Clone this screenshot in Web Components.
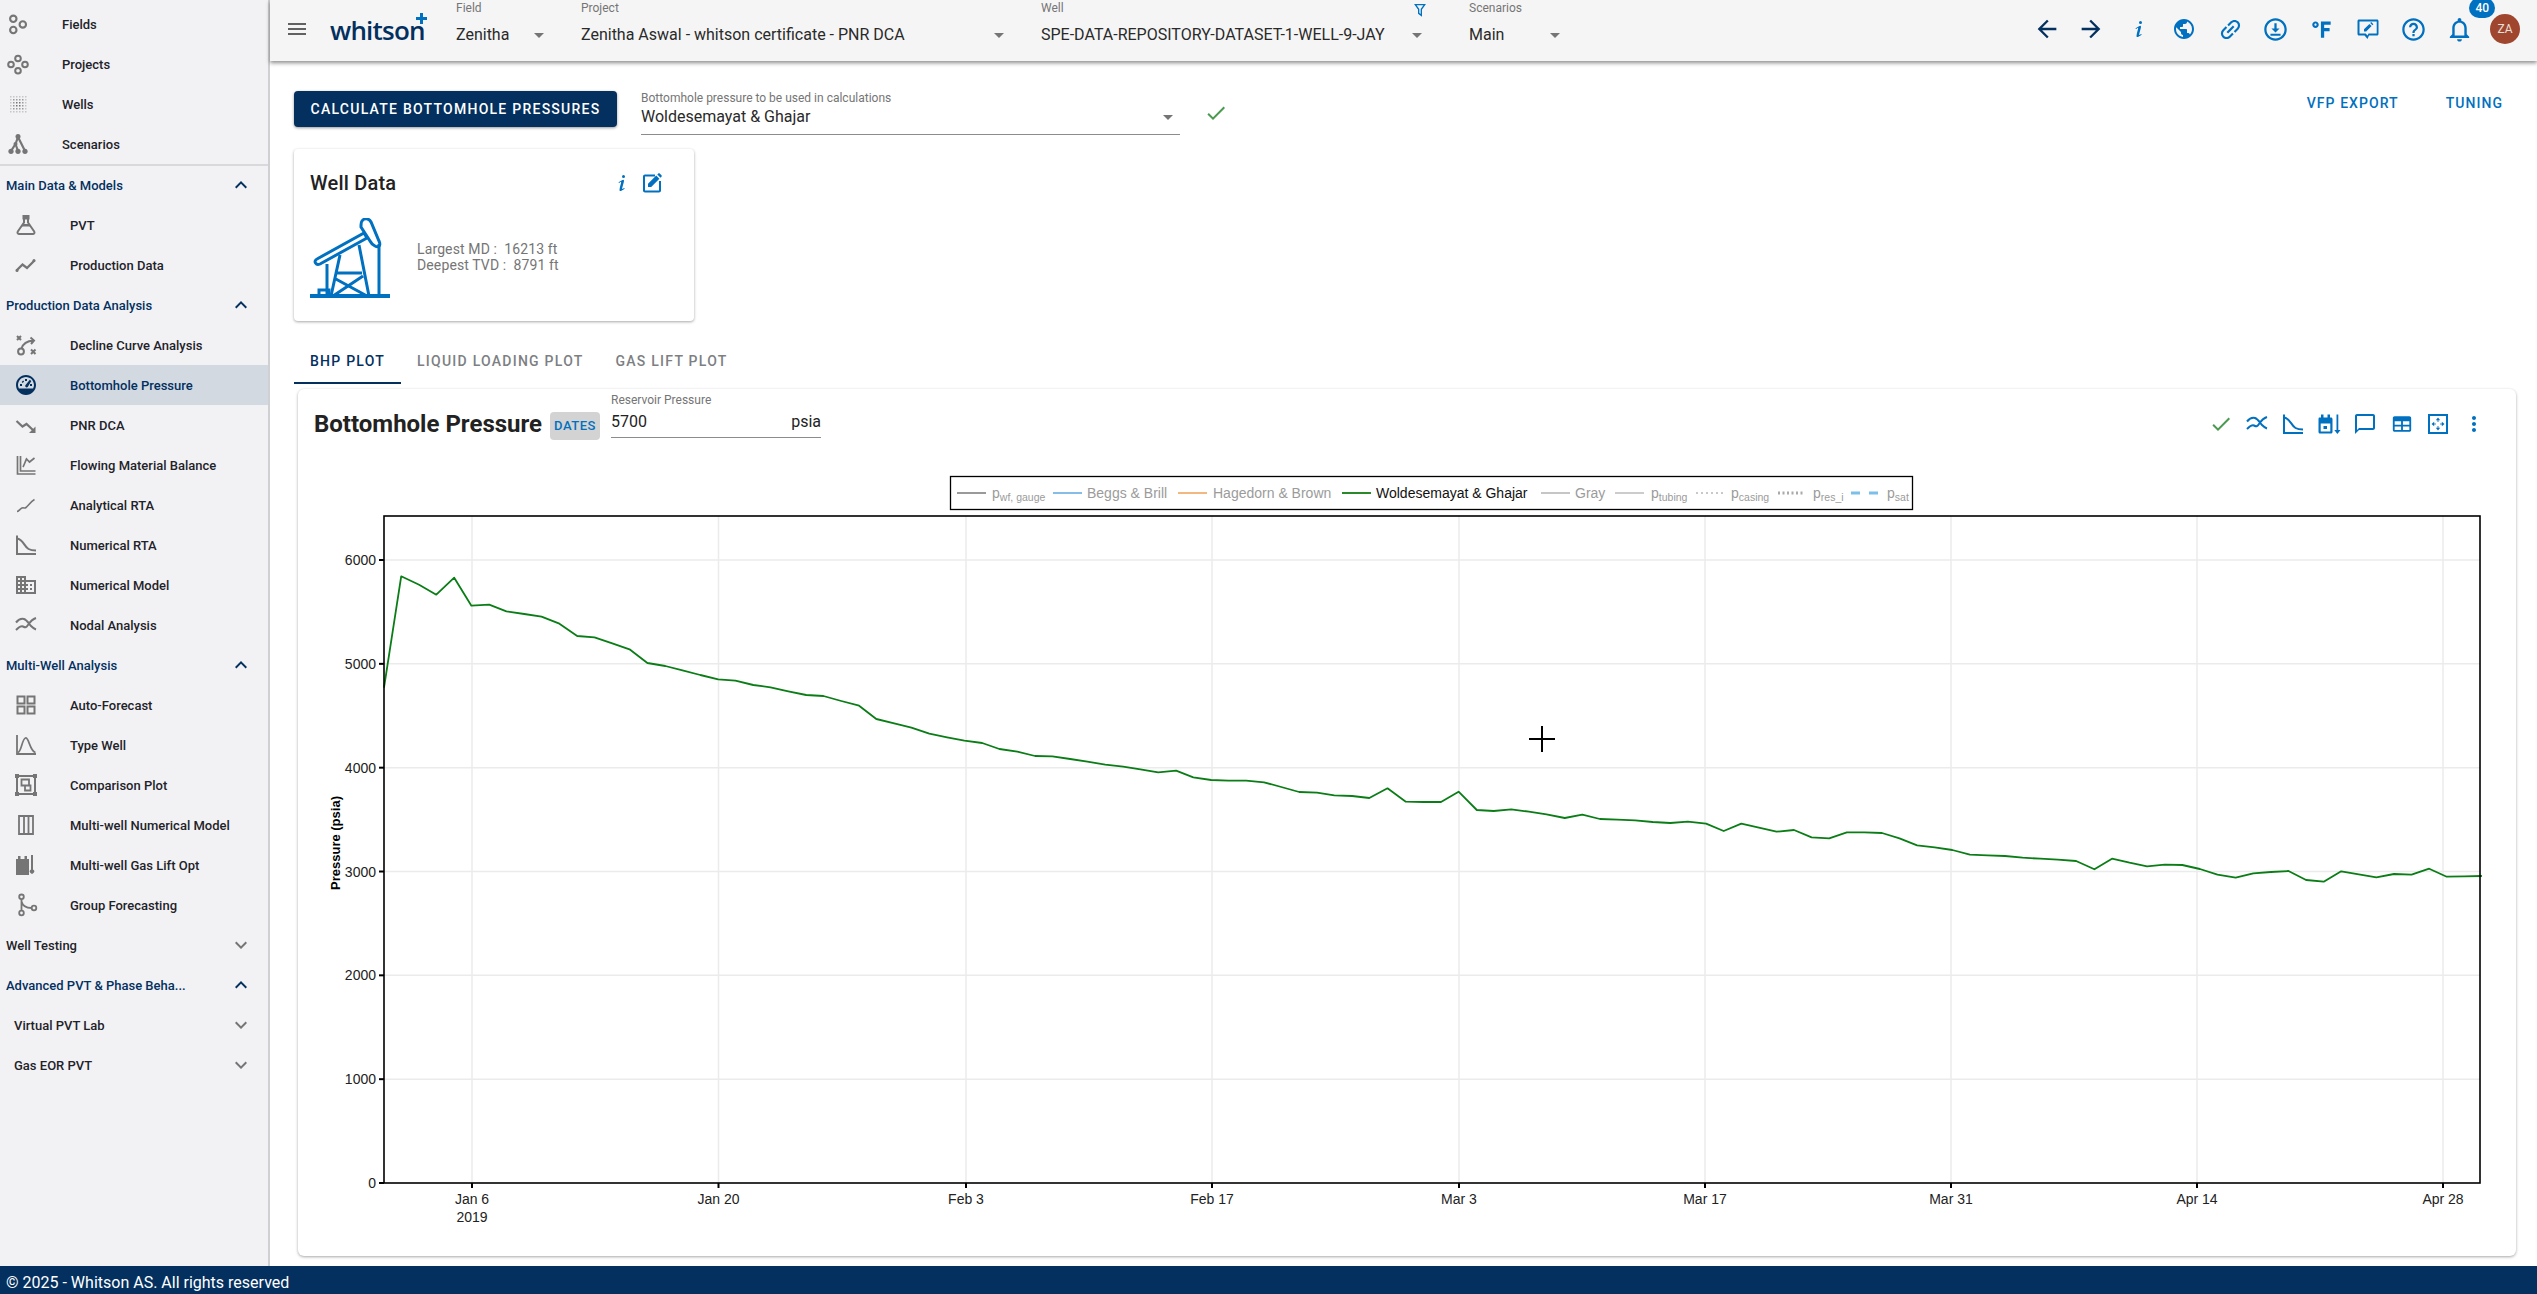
<!DOCTYPE html>
<html lang="en">
<head>
<meta charset="utf-8">
<title>whitson+ Bottomhole Pressure</title>
<style>
  html, body { margin: 0; height: 100%; overflow: hidden; background: #fff; }
  body { font-family: Roboto, "Liberation Sans", sans-serif; }
</style>
</head>
<body>

<wh-app>
  <wh-sidebar slot="sidebar">
    <wh-nav-item icon="fields" top>Fields</wh-nav-item>
    <wh-nav-item icon="projects" top>Projects</wh-nav-item>
    <wh-nav-item icon="wells" top>Wells</wh-nav-item>
    <wh-nav-item icon="scenarios" top>Scenarios</wh-nav-item>
    <wh-nav-divider></wh-nav-divider>
    <wh-nav-section open>Main Data &amp; Models</wh-nav-section>
    <wh-nav-item icon="pvt">PVT</wh-nav-item>
    <wh-nav-item icon="proddata">Production Data</wh-nav-item>
    <wh-nav-section open>Production Data Analysis</wh-nav-section>
    <wh-nav-item icon="dca">Decline Curve Analysis</wh-nav-item>
    <wh-nav-item icon="gauge" active>Bottomhole Pressure</wh-nav-item>
    <wh-nav-item icon="pnr">PNR DCA</wh-nav-item>
    <wh-nav-item icon="fmb">Flowing Material Balance</wh-nav-item>
    <wh-nav-item icon="rta">Analytical RTA</wh-nav-item>
    <wh-nav-item icon="decline">Numerical RTA</wh-nav-item>
    <wh-nav-item icon="domain">Numerical Model</wh-nav-item>
    <wh-nav-item icon="nodal">Nodal Analysis</wh-nav-item>
    <wh-nav-section open>Multi-Well Analysis</wh-nav-section>
    <wh-nav-item icon="grid">Auto-Forecast</wh-nav-item>
    <wh-nav-item icon="bell-curve">Type Well</wh-nav-item>
    <wh-nav-item icon="compare">Comparison Plot</wh-nav-item>
    <wh-nav-item icon="columns">Multi-well Numerical Model</wh-nav-item>
    <wh-nav-item icon="gaslift">Multi-well Gas Lift Opt</wh-nav-item>
    <wh-nav-item icon="group">Group Forecasting</wh-nav-item>
    <wh-nav-section>Well Testing</wh-nav-section>
    <wh-nav-section open>Advanced PVT &amp; Phase Beha...</wh-nav-section>
    <wh-nav-section sub>Virtual PVT Lab</wh-nav-section>
    <wh-nav-section sub>Gas EOR PVT</wh-nav-section>
  </wh-sidebar>

  <wh-header slot="header"></wh-header>

  <wh-toolbar></wh-toolbar>
  <wh-well-card></wh-well-card>
  <wh-tabs></wh-tabs>
  <wh-bhp-card></wh-bhp-card>

  <wh-footer slot="footer">© 2025 - Whitson AS. All rights reserved</wh-footer>
</wh-app>

<script>
const stroke = (d, w = 2) => `<path d="${d}" fill="none" stroke="currentColor" stroke-width="${w}"/>`;

function wellDots() {
    let out = '';
    for (let i = 0; i < 6; i++) {
        for (let j = 0; j < 6; j++) {
            const dist = Math.max(Math.abs(i - 2.5), Math.abs(j - 2.5));
            const op = dist === 2.5 ? 0.35 : dist === 1.5 ? 0.7 : 1;
            out += `<rect x="${4 + i * 3}" y="${4 + j * 3}" width="1.5" height="1.5" opacity="${op}"/>`;
        }
    }
    return out;
}

const ICONS = {
    menu: '<path d="M3 18h18v-2H3v2zm0-5h18v-2H3v2zm0-7v2h18V6H3z"/>',
    back: '<path d="M20 11H7.83l5.59-5.59L12 4l-8 8 8 8 1.41-1.41L7.83 13H20v-2z"/>',
    forward: '<path d="M12 4l-1.41 1.41L16.17 11H4v2h12.17l-5.58 5.59L12 20l8-8z"/>',
    info: '<path d="M13.5,4A1.5,1.5 0 0,0 12,5.5A1.5,1.5 0 0,0 13.5,7A1.5,1.5 0 0,0 15,5.5A1.5,1.5 0 0,0 13.5,4M13.14,8.77C11.95,8.87 8.7,11.46 8.7,11.46C8.5,11.61 8.56,11.6 8.72,11.88C8.88,12.15 8.86,12.17 9.05,12.04C9.25,11.91 9.58,11.7 10.13,11.36C12.25,10 10.47,13.14 9.56,18.43C9.2,21.05 11.56,19.7 12.17,19.3C12.77,18.91 14.38,17.8 14.54,17.69C14.76,17.54 14.6,17.42 14.43,17.17C14.31,17 14.19,17.12 14.19,17.12C13.54,17.55 12.35,18.45 12.19,17.88C12,17.31 13.22,13.4 13.89,10.71C14,10.07 14.3,8.67 13.14,8.77Z"/>',
    globe: '<path d="M12 2C6.48 2 2 6.48 2 12s4.48 10 10 10 10-4.48 10-10S17.52 2 12 2zm-1 17.93c-3.95-.49-7-3.85-7-7.93 0-.62.08-1.21.21-1.79L9 15v1c0 1.1.9 2 2 2v1.93zm6.9-2.54c-.26-.81-1-1.39-1.9-1.39h-1v-3c0-.55-.45-1-1-1H8v-2h2c.55 0 1-.45 1-1V7h2c1.1 0 2-.9 2-2v-.41c2.93 1.19 5 4.06 5 7.41 0 2.08-.8 3.97-2.1 5.39z"/>',
    link: '<path transform="rotate(-45 12 12)" d="M3.9 12c0-1.71 1.39-3.1 3.1-3.1h4V7H7c-2.76 0-5 2.24-5 5s2.24 5 5 5h4v-1.9H7c-1.71 0-3.1-1.39-3.1-3.1zM8 13h8v-2H8v2zm9-6h-4v1.9h4c1.71 0 3.1 1.39 3.1 3.1s-1.39 3.1-3.1 3.1h-4V17h4c2.76 0 5-2.24 5-5s-2.24-5-5-5z"/>',
    download: '<path d="M12 2C6.48 2 2 6.48 2 12s4.48 10 10 10 10-4.48 10-10S17.52 2 12 2zm0 18c-4.41 0-8-3.59-8-8s3.59-8 8-8 8 3.59 8 8-3.59 8-8 8z"/><path d="M11 6.5h2V11h2.6L12 14.6 8.400 11H11zM7.500 15.800h9v1.800h-9z"/>',
    fahrenheit: '<path d="M11 20V5H20V8H14V11H19V14H14V20H11M6 5C7.66 5 9 6.34 9 8C9 9.66 7.66 11 6 11C4.34 11 3 9.66 3 8C3 6.34 4.34 5 6 5M6 7C5.45 7 5 7.45 5 8C5 8.55 5.45 9 6 9C6.55 9 7 8.55 7 8C7 7.45 6.55 7 6 7Z"/>',
    feedback: '<path d="M21 2.500H3c-.83 0-1.500.67-1.500 1.500v13c0 .83.67 1.500 1.500 1.500h5.500l3 3.500 1.500-3.500h8c.83 0 1.500-.67 1.500-1.500V4c0-.83-.67-1.500-1.500-1.500zm-.3 14H12.500l-1 2.100-1.800-2.100H3.500v-12h17.200z"/><path d="M8 14.500v-2.200l5.400-5.400 2.200 2.200-5.400 5.400zM14.200 6.100l1-1 2.200 2.200-1 1z"/>',
    help: '<path d="M11 18h2v-2h-2v2zm1-16C6.48 2 2 6.48 2 12s4.48 10 10 10 10-4.48 10-10S17.52 2 12 2zm0 18c-4.41 0-8-3.59-8-8s3.59-8 8-8 8 3.59 8 8-3.59 8-8 8zm0-14c-2.21 0-4 1.79-4 4h2c0-1.1.9-2 2-2s2 .9 2 2c0 2-3 1.750-3 5h2c0-2.250 3-2.500 3-5 0-2.210-1.790-4-4-4z"/>',
    bell: '<path d="M12 22c1.100 0 2-.9 2-2h-4c0 1.100.9 2 2 2zm6-6v-5c0-3.070-1.630-5.640-4.500-6.320V4c0-.83-.67-1.500-1.500-1.500s-1.500.67-1.500 1.500v.68C7.640 5.360 6 7.920 6 11v5l-2 2v1h16v-1l-2-2zm-2 1H8v-6c0-2.480 1.510-4.500 4-4.500s4 2.020 4 4.500v6z"/>',
    more: '<path d="M12 8c1.100 0 2-.9 2-2s-.9-2-2-2-2 .9-2 2 .9 2 2 2zm0 2c-1.100 0-2 .9-2 2s.9 2 2 2 2-.9 2-2-.9-2-2-2zm0 6c-1.100 0-2 .9-2 2s.9 2 2 2 2-.9 2-2-.9-2-2-2z"/>',
    less: '<path d="M12 8l-6 6 1.410 1.410L12 10.830l4.590 4.580L18 14z"/>',
    expand: '<path d="M16.590 8.590L12 13.170 7.410 8.590 6 10l6 6 6-6z"/>',
    caret: '<path d="M7 10l5 5 5-5z"/>',
    check: '<path d="M9 16.170L4.830 12l-1.420 1.410L9 19 21 7l-1.410-1.410z"/>',
    edit: '<path d="M5 3.500h10v2H5v14h14V10h2v9.500c0 1.100-.9 2-2 2H5c-1.100 0-2-.9-2-2v-14c0-1.100.9-2 2-2z"/><path d="M8 16v-3.200l8.200-8.200 3.200 3.200-8.200 8.200zM17.300 3.500l1-1c.4-.4 1-.4 1.400 0l1.800 1.800c.4.4.4 1 0 1.400l-1 1z"/>',
    filter: stroke('M5 4h14l-5 7v9l-4-3v-6z', 2),
    fields: `<g fill="none" stroke="currentColor" stroke-width="2.100"><circle cx="7.300" cy="6.800" r="3.200"/><circle cx="16.800" cy="12.400" r="3.200"/><circle cx="7.300" cy="18" r="3.200"/></g>`,
    projects: `<g fill="none" stroke="currentColor" stroke-width="2"><circle cx="12" cy="6.500" r="2.800"/><circle cx="5" cy="12.500" r="2.800"/><circle cx="19" cy="12.500" r="2.800"/><circle cx="12" cy="18.800" r="2.800"/></g>`,
    wells: wellDots(),
    scenarios: '<circle cx="12" cy="4.500" r="2.500"/><circle cx="5" cy="19.300" r="2.600"/><circle cx="12" cy="19.300" r="2.600"/><circle cx="19" cy="19.300" r="2.600"/><circle cx="9.500" cy="12" r="2"/>' + stroke('M12 5l-2.500 7L5 19M9.500 12L12 19M12 5l7 14', 2.200),
    pvt: '<path d="M8.500 2h7v4.500h-7z"/>' + stroke('M10 6v3.500L3.800 18.500c-.8 1.300.1 2.500 1.400 2.500h13.600c1.300 0 2.200-1.200 1.400-2.500L14 9.500V6', 2) + '<path d="M7.800 13.500h8.400l-1.500-2.500H9.300z"/>',
    proddata: stroke('M2.500 17.500l6-6 4.500 3.500 7.500-7.500', 2.300) + '<circle cx="3" cy="17.500" r="1.500"/><circle cx="20" cy="7.500" r="1.500"/>',
    dca: stroke('M3 3l4 4M7 3L3 7M17 16.500l4.500 4.500M21.500 16.500L17 21', 2) + stroke('M7.500 15.500C9 10.500 13 8 19.500 7.500M16.500 4.500l3.500 3-3 3.500', 2) + '<circle cx="7" cy="18.500" r="2.900" fill="none" stroke="currentColor" stroke-width="2"/>',
    gauge: '<path d="M12 2C6.500 2 2 6.500 2 12s4.500 10 10 10 10-4.500 10-10S17.500 2 12 2zm0 2c4.400 0 8 3.600 8 8 0 1.300-.3 2.500-.9 3.600H4.900C4.300 14.500 4 13.300 4 12c0-4.400 3.600-8 8-8z"/><path d="M11 6h2v2h-2zM6 11h2v2H6zM16 11h2v2h-2zM7.700 8.900l1.400-1.400 1 1-1.400 1.400zM15.800 6.800l1.500 1.200-3.400 5.700c-.5.800-1.500.9-2.200.3-.7-.6-.6-1.700.1-2.200z"/>',
    pnr: stroke('M2.500 8l6 5.500 4-2.500 7.500 7', 2.200) + '<path d="M21.500 13.500V20H15z"/>',
    fmb: stroke('M3.500 3v18h18M6.500 3v15h15', 1.700) + stroke('M9 14c1.500-3 2.500-6 3.500-8l3 3 5-4', 1.700),
    rta: stroke('M3 18.500c1.500 0 3-2.500 5-3.500s2 1 4-.5 5-6 8.500-8', 1.600),
    decline: stroke('M3 2.500V21h19M3 5.500c6 .5 7 8 11.500 10.500 2 1.100 5 1.500 7.500 1.500', 2),
    domain: '<path d="M12 7V3H2v18h20V7H12zM6 19H4v-2h2v2zm0-4H4v-2h2v2zm0-4H4V9h2v2zm0-4H4V5h2v2zm4 12H8v-2h2v2zm0-4H8v-2h2v2zm0-4H8V9h2v2zm0-4H8V5h2v2zm10 12h-8v-2h2v-2h-2v-2h2v-2h-2V9h8v10zm-2-8h-2v2h2v-2zm0 4h-2v2h2v-2z"/>',
    nodal: stroke('M2 9.500c2.500-3 5-4.500 8-3.500s5 5 7 7 3.500 3 5 3.500M2 17c3.500-3.500 5-4.500 7-3.500s3 1.500 5-1.500 5-6 8-7', 2),
    grid: stroke('M3.500 3.500h7v7h-7zM13.500 3.500h7v7h-7zM3.500 13.500h7v7h-7zM13.500 13.500h7v7h-7z', 2),
    'bell-curve': stroke('M3 2v19h19', 1.800) + stroke('M4 19.500c3.500-1 4-13.500 7.500-14.500s4 13 10 14.500', 1.700),
    compare: stroke('M3 3h18v18H3z', 2) + stroke('M7.500 6.500h7.500v6H7.500zM11 12.500h5.500v5H11z', 1.800) + '<path d="M1 1h4v4H1zM19 1h4v4h-4zM1 19h4v4H1zM19 19h4v4h-4z"/>',
    columns: stroke('M5 3h14v18H5zM10 3v18M14.500 3v18', 1.800),
    gaslift: '<path d="M2 6h2V3h2.500v3h4V3H13v3h2v16H2z"/><path d="M17 2h2v14.500a2.200 2.200 0 1 1-2 0z"/>',
    group: '<circle cx="7.500" cy="3.800" r="2.300" fill="none" stroke="currentColor" stroke-width="1.800"/><circle cx="7.500" cy="20" r="2.300" fill="none" stroke="currentColor" stroke-width="1.800"/><circle cx="20" cy="15" r="2.300" fill="none" stroke="currentColor" stroke-width="1.800"/>' + stroke('M7.500 6v11.500M7.500 8.500c1 4 4 6.500 10 6.500', 1.800),
    'date-sort': '<path d="M2 5.500h2V2.500h2.500v3h4v-3H13v3h1c.8 0 1.500.7 1.500 1.500v13c0 .8-.7 1.500-1.500 1.500H3c-.8 0-1.500-.7-1.500-1.500V7c0-.8.5-1.500.5-1.500zM3.700 11.500v8h9.600v-8zM6.500 14h3.500v3H6.500z" fill-rule="evenodd"/><path d="M19.500 2.500h1.800V18h2.200l-3.100 4-3.100-4h2.200z"/>',
    chat: '<path d="M20 2H4c-1.100 0-2 .9-2 2v18l4-4h14c1.100 0 2-.9 2-2V4c0-1.100-.9-2-2-2zm0 14H6l-2 2V4h16v12z"/>',
    table: '<path d="M20 3.500H4c-1.100 0-2 .9-2 2v13c0 1.100.9 2 2 2h16c1.100 0 2-.9 2-2v-13c0-1.100-.9-2-2-2zM4 9h7v3.700H4zm9 0h7v3.700h-7zM4 14.700h7v3.800H4zm9 0h7v3.800h-7z" fill-rule="evenodd"/>',
    fit: stroke('M3 3h18v18H3z', 2) + '<path d="M12 5.500l2.200 2.700H9.800zM12 18.500l-2.200-2.700h4.400zM5.500 12l2.700-2.200v4.400zM18.500 12l-2.700 2.200V9.800z"/><path d="M11.400 8.200h1.200v1.600h-1.200zM11.400 14.200h1.200v1.600h-1.200zM8.200 11.400h1.600v1.200H8.200zM14.200 11.400h1.600v1.200h-1.600z"/>'
};

class WhIcon extends HTMLElement {
    connectedCallback() {
        const size = this.getAttribute('size') || 24;
        const name = this.getAttribute('name');
        this.attachShadow({ mode: 'open' });
        this.shadowRoot.innerHTML = `
            <style>
                :host { display: inline-flex; width: ${size}px; height: ${size}px; flex: none; }
                svg { width: 100%; height: 100%; fill: currentColor; display: block; }
            </style>
            <svg viewBox="0 0 24 24" aria-hidden="true">${ICONS[name] || ''}</svg>`;
    }
}

class WhApp extends HTMLElement {
    connectedCallback() {
        this.attachShadow({ mode: 'open' });
        this.shadowRoot.innerHTML = `
            <style>
                :host { display: grid; height: 100vh; grid-template-columns: 270px 1fr; grid-template-rows: 61px 1fr 28px; }
                ::slotted([slot=sidebar]) { grid-row: 1 / 3; }
                ::slotted([slot=footer]) { grid-column: 1 / 3; }
                main { padding: 30px 21px 0 24px; overflow: hidden; display: flex; flex-direction: column; }
            </style>
            <slot name="sidebar"></slot>
            <slot name="header"></slot>
            <main><slot></slot></main>
            <slot name="footer"></slot>`;
    }
}

class WhSidebar extends HTMLElement {
    connectedCallback() {
        this.attachShadow({ mode: 'open' });
        this.shadowRoot.innerHTML = `
            <style>
                :host { display: block; background: #f2f2f5; border-right: 2px solid #cfd0d3; box-sizing: border-box; padding-top: 4px; overflow: hidden; }
            </style>
            <slot></slot>`;
    }
}

class WhNavItem extends HTMLElement {
    connectedCallback() {
        const top = this.hasAttribute('top');
        const active = this.hasAttribute('active');
        this.attachShadow({ mode: 'open' });
        this.shadowRoot.innerHTML = `
            <style>
                :host { display: flex; align-items: center; height: 40px; font: 500 13px Roboto, sans-serif; color: ${active ? '#03305f' : '#1f2329'}; background: ${active ? '#d2d9e1' : 'transparent'}; padding-left: ${top ? 6 : 14}px; }
                wh-icon { color: ${active ? '#03305f' : '#757575'}; margin-right: 32px; }
            </style>
            <wh-icon name="${this.getAttribute('icon')}"></wh-icon>
            <slot></slot>`;
    }
}

class WhNavDivider extends HTMLElement {
    connectedCallback() {
        this.attachShadow({ mode: 'open' });
        this.shadowRoot.innerHTML = `<style>:host { display: block; height: 2px; background: #d9d9dd; margin-bottom: -1px; }</style>`;
    }
}

class WhNavSection extends HTMLElement {
    connectedCallback() {
        const open = this.hasAttribute('open');
        const sub = this.hasAttribute('sub');
        this.attachShadow({ mode: 'open' });
        this.shadowRoot.innerHTML = `
            <style>
                :host { display: flex; align-items: center; justify-content: space-between; height: 40px; font: 500 13px Roboto, sans-serif; color: ${open ? '#03305f' : '#1f2329'}; padding: 0 15px 0 ${sub ? 14 : 6}px; }
                wh-icon { color: ${open ? '#03305f' : '#757575'}; }
            </style>
            <slot></slot>
            <wh-icon name="${open ? 'less' : 'expand'}"></wh-icon>`;
    }
}

class WhSelect extends HTMLElement {
    connectedCallback() {
        this.attachShadow({ mode: 'open' });
        this.shadowRoot.innerHTML = `
            <style>
                :host { display: flex; flex-direction: column; flex: none; font-family: Roboto, sans-serif; box-sizing: border-box; }
                label { font-size: 12px; line-height: 14px; color: #757575; white-space: nowrap; }
                .value { display: flex; align-items: center; justify-content: space-between; font-size: 16px; line-height: 24px; color: #2a2a2a; white-space: nowrap; margin-top: var(--value-gap, 0); }
                wh-icon { color: #757575; margin-right: var(--caret-shift, -3px); }
            </style>
            <label>${this.getAttribute('label')}</label>
            <div class="value"><span><slot></slot></span><wh-icon name="caret"></wh-icon></div>`;
    }
}

class WhHeader extends HTMLElement {
    connectedCallback() {
        const actions = [['back', 28], ['forward', 28], ['info', 24], ['globe', 24], ['link', 27], ['download', 27], ['fahrenheit', 26], ['feedback', 24], ['help', 27], ['bell', 29]];
        this.attachShadow({ mode: 'open' });
        this.shadowRoot.innerHTML = `
            <style>
                :host { display: flex; align-items: flex-start; background: #f5f5f5; box-shadow: 0 2px 4px rgba(0,0,0,.45); position: relative; z-index: 2; padding-left: 15px; height: 61px; box-sizing: border-box; }
                .menu { color: #616161; margin: 17px 21px 0 0; }
                .logo { position: relative; width: 97px; margin: 8px 29px 0 0; font: 600 26px/44px "Open Sans", sans-serif; letter-spacing: -.8px; color: #03305f; }
                .plus { position: absolute; left: 86px; top: 5px; width: 11px; height: 11px; fill: #0070c0; }
                wh-select { margin-top: 1px; --value-gap: 8px; --caret-shift: -4.500px; }
                .filter { position: absolute; left: 1142px; top: 2px; color: #0070c0; }
                .actions { margin-left: auto; display: flex; align-items: center; height: 58px; padding-right: 17px; color: #0070c0; }
                .actions span { display: flex; justify-content: center; align-items: center; width: 45.800px; height: 24px; position: relative; }
                .actions span:nth-child(2) { left: -2px; }
                .dark { color: #03305f; }
                .badge { position: absolute; left: 33px; top: -19px; min-width: 26px; height: 20px; border-radius: 10px; background: #0070c0; color: #fff; font: 500 12px/20px Roboto, sans-serif; text-align: center; }
                .avatar { width: 30px; height: 30px; border-radius: 50%; background: #a0452e; color: #e8e0dc; font: 400 12px/30px Roboto, sans-serif; text-align: center; margin-left: 8px; position: relative; z-index: 1; }
            </style>
            <wh-icon class="menu" name="menu" size="24" style="width:24px"></wh-icon>
            <div class="logo">whitson<svg class="plus" viewBox="0 0 11 11"><path d="M4 0h3v4h4v3H7v4H4V7H0V4h4z"/></svg></div>
            <wh-select label="Field" style="width:90px;margin-right:35px">Zenitha</wh-select>
            <wh-select label="Project" style="width:425px;margin-right:35px">Zenitha Aswal - whitson certificate - PNR DCA</wh-select>
            <wh-select label="Well" style="width:383px;margin-right:45px">SPE-DATA-REPOSITORY-DATASET-1-WELL-9-JAY</wh-select>
            <wh-select label="Scenarios" style="width:93px">Main</wh-select>
            <wh-icon class="filter" name="filter" size="16"></wh-icon>
            <div class="actions">
                ${actions.map(([n, s], i) => `<span class="${i < 2 ? 'dark' : ''}"><wh-icon name="${n}" size="${s}"></wh-icon>${n === 'bell' ? '<b class="badge">40</b>' : ''}</span>`).join('')}
                <div class="avatar">ZA</div>
            </div>`;
    }
}

class WhToolbar extends HTMLElement {
    connectedCallback() {
        this.attachShadow({ mode: 'open' });
        this.shadowRoot.innerHTML = `
            <style>
                :host { display: flex; align-items: flex-start; height: 58px; flex: none; }
                button { width: 323px; height: 36px; border: 0; border-radius: 4px; background: #03305f; color: #fff; font: 500 14px Roboto, sans-serif; letter-spacing: 1.250px; box-shadow: 0 1px 3px rgba(0,0,0,.4); padding: 0; flex: none; }
                .pick { margin-left: 24px; width: 539px; height: 43px; border-bottom: 1px solid #8c8c8c; flex: none; }
                wh-select { width: 100%; --caret-shift: 0px; }
                .ok { color: #4a9a50; margin: 10px 0 0 24px; }
                .links { margin-left: auto; display: flex; gap: 47px; padding: 0 13px 0 0; font: 500 14px/24px Roboto, sans-serif; letter-spacing: 1.050px; color: #0070c0; }
            </style>
            <button>CALCULATE BOTTOMHOLE PRESSURES</button>
            <div class="pick"><wh-select label="Bottomhole pressure to be used in calculations">Woldesemayat &amp; Ghajar</wh-select></div>
            <wh-icon class="ok" name="check"></wh-icon>
            <div class="links"><span>VFP EXPORT</span><span>TUNING</span></div>`;
    }
}

class WhWellCard extends HTMLElement {
    connectedCallback() {
        this.attachShadow({ mode: 'open' });
        this.shadowRoot.innerHTML = `
            <style>
                :host { display: block; width: 400px; height: 172px; flex: none; box-sizing: border-box; padding: 20px 16px; background: #fff; border-radius: 4px; box-shadow: 0 1px 3px rgba(0,0,0,.35); font-family: Roboto, sans-serif; }
                .top { display: flex; align-items: center; height: 28px; }
                h3 { margin: 0; font: 500 20px/28px Roboto, sans-serif; letter-spacing: .2px; color: #222; flex: 1; }
                wh-icon { color: #0070c0; }
                .top wh-icon + wh-icon { margin: 0 14px 0 6px; }
                .body { display: flex; align-items: center; margin-top: 21px; }
                svg { width: 82px; height: 80px; flex: none; color: #0070c0; }
                p { margin: -3px 0 0 25px; font-size: 14px; line-height: 16px; letter-spacing: .12px; color: #757575; white-space: pre; }
            </style>
            <div class="top"><h3>Well Data</h3><wh-icon name="info"></wh-icon><wh-icon name="edit"></wh-icon></div>
            <div class="body">
                <svg viewBox="0 0 82 80" fill="none" stroke="currentColor" stroke-width="3">
                    <path d="M0 78h80" stroke-width="4"/>
                    <path d="M9 78V72h10v6M7 41l47-26 3 5-47 26c-4 2-7-3-3-5z"/>
                    <path d="M52 3c2-3 7-3 9 1l8 19c2 4 0 7-4 5-2-1-4-3-5-5L51 9c0-3 0-5 1-6z" />
                    <path d="M69 26v52M17 46v30M49 27l10 51M30 37L21 78M26 55h26M24 60l33 18M53 58L23 78"/>
                </svg>
                <p>Largest MD :  16213 ft
Deepest TVD :  8791 ft</p>
            </div>`;
    }
}

class WhTabs extends HTMLElement {
    connectedCallback() {
        this.attachShadow({ mode: 'open' });
        this.shadowRoot.innerHTML = `
            <style>
                :host { display: flex; flex: none; height: 63px; align-items: flex-end; font: 500 14px Roboto, sans-serif; letter-spacing: 1.250px; color: #7d7f83; margin-bottom: 5px; }
                div { padding: 0 16px; height: 46px; line-height: 46px; }
                .on { color: #03305f; box-shadow: inset 0 -2px 0 #03305f; width: 107px; padding: 0; box-sizing: border-box; text-align: center; }
            </style>
            <div class="on">BHP PLOT</div><div>LIQUID LOADING PLOT</div><div>GAS LIFT PLOT</div>`;
    }
}

// daily values read off the plot, as screen pixels of the 1000 px / 1100 px crops
const LEFT_TRACE = [[0,383],[27,49],[55,74],[82,104],[110,53],[137,137],[165,134],[192,154],[220,162],[247,170],[275,191],[303,228],[330,232],[358,250],[385,268],[413,309],[441,318],[468,331],[496,345],[524,358],[551,362],[579,375],[606,382],[634,394],[662,405],[689,408],[717,423],[745,437],[772,477],[800,490],[827,503],[855,521],[883,532],[910,542],[938,549],[965,567],[993,575],[1021,588],[1048,589],[1076,597],[1103,605],[1131,614],[1159,620],[1186,628],[1214,637],[1242,632],[1269,652],[1297,660],[1324,662],[1352,662],[1380,667],[1407,681],[1435,696],[1463,698],[1490,706],[1518,708],[1545,714]];
const RIGHT_TRACE = [[5,85],[31,125],[56,126],[81,126],[106,95],[132,150],[156,153],[181,148],[206,155],[231,163],[257,174],[282,164],[307,177],[332,179],[357,181],[382,186],[407,189],[432,185],[458,191],[483,213],[508,191],[533,203],[558,215],[583,210],[608,232],[633,235],[658,217],[683,217],[708,219],[733,235],[758,256],[783,262],[808,270],[833,284],[858,286],[883,288],[908,293],[933,296],[958,299],[984,303],[1010,328],[1035,296],[1060,308],[1085,319],[1110,314],[1135,315],[1160,327],[1185,344],[1211,353],[1236,340],[1261,336],[1286,333],[1311,360],[1336,365],[1361,334],[1386,343],[1411,352],[1436,342],[1461,344],[1486,326],[1511,350],[1536,349],[1561,348]];

class WhBhpChart extends HTMLElement {
    connectedCallback() {
        const L = 384, R = 2480, T = 516, B = 1183;
        const yTicks = [0, 1000, 2000, 3000, 4000, 5000, 6000].map(v => ({ v, y: B - v * 0.10383 }));
        const xTicks = [['Jan 6', 472], ['Jan 20', 718.5], ['Feb 3', 966], ['Feb 17', 1212], ['Mar 3', 1459], ['Mar 17', 1705], ['Mar 31', 1951], ['Apr 14', 2197], ['Apr 28', 2443]];
        const pts = LEFT_TRACE.map(([x, y]) => [384 + x / 1.568, 560 + y / 3])
            .concat(RIGHT_TRACE.map(([x, y]) => [1384 + x / 1.4218, 760 + y / 3]))
            .map(p => p[0].toFixed(1) + ',' + p[1].toFixed(1)).join(' ');
        const legend = [
            { x1: 957, x2: 986, c: '#9a9a9a', tx: 992, t: 'p', s: 'wf, gauge' },
            { x1: 1053, x2: 1082, c: '#85bde8', tx: 1087, t: 'Beggs & Brill' },
            { x1: 1178, x2: 1207, c: '#f2b880', tx: 1213, t: 'Hagedorn & Brown' },
            { x1: 1342, x2: 1371, c: '#2a8a2a', tx: 1376, t: 'Woldesemayat & Ghajar', on: true },
            { x1: 1541, x2: 1570, c: '#c6c6c6', tx: 1575, t: 'Gray' },
            { x1: 1615, x2: 1644, c: '#cccccc', tx: 1651, t: 'p', s: 'tubing' },
            { x1: 1696, x2: 1724, c: '#c8c8c8', tx: 1731, t: 'p', s: 'casing', dash: '2 3' },
            { x1: 1778, x2: 1805, c: '#aaaaaa', w: 3, tx: 1813, t: 'p', s: 'res_i', dash: '2 2.500' },
            { x1: 1851, x2: 1878, c: '#7cc0ea', w: 3, tx: 1887, t: 'p', s: 'sat', dash: '9 9' }
        ];
        const esc = s => s.replace(/&/g, '&amp;');
        this.attachShadow({ mode: 'open' });
        this.shadowRoot.innerHTML = `
            <style>
                :host { display: block; flex: none; height: 770px; }
                svg { display: block; width: 2218px; height: 770px; font-family: "Liberation Sans", Arial, sans-serif; }
                text { font-size: 14px; fill: #222; }
                .grid { stroke: #ebebeb; stroke-width: 1.500; }
                .tick { stroke: #000; stroke-width: 2; }
                .leg { font-size: 14px; fill: #9b9b9b; }
                .leg.on { fill: #111; }
                .leg tspan { font-size: 10.500px; }
            </style>
            <svg viewBox="298 470 2218 770">
                ${yTicks.filter(t => t.v > 0).map(t => `<line class="grid" x1="${L}" x2="${R}" y1="${t.y}" y2="${t.y}"/>`).join('')}
                ${xTicks.map(t => `<line class="grid" x1="${t[1]}" x2="${t[1]}" y1="${T}" y2="${B}"/>`).join('')}
                <polyline points="${pts}" fill="none" stroke="#0a7d16" stroke-width="1.800" stroke-linejoin="round"/>
                <rect x="${L}" y="${T}" width="${R - L}" height="${B - T}" fill="none" stroke="#000" stroke-width="1.600"/>
                ${yTicks.map(t => `<line class="tick" x1="${L - 5}" x2="${L}" y1="${t.y}" y2="${t.y}"/><text x="376" y="${t.y + 5}" text-anchor="end">${t.v}</text>`).join('')}
                ${xTicks.map(t => `<line class="tick" x1="${t[1]}" x2="${t[1]}" y1="${B}" y2="${B + 5}"/><text x="${t[1]}" y="1204" text-anchor="middle">${t[0]}</text>`).join('')}
                <text x="472" y="1222" text-anchor="middle">2019</text>
                <text transform="translate(340 843) rotate(-90)" text-anchor="middle" style="font-size:13px;font-weight:700;fill:#000">Pressure (psia)</text>
                <rect x="950.500" y="476.500" width="962" height="33" fill="#fff" stroke="#000" stroke-width="1.300"/>
                ${legend.map(i => `
                    <line x1="${i.x1}" x2="${i.x2}" y1="493" y2="493" stroke="${i.c}" stroke-width="${i.w || 2}" ${i.dash ? `stroke-dasharray="${i.dash}"` : ''}/>
                    <text class="leg ${i.on ? 'on' : ''}" x="${i.tx}" y="498">${esc(i.t)}${i.s ? `<tspan dy="3">${i.s}</tspan>` : ''}</text>`).join('')}
                <path d="M1529 739h26M1542 726v26" stroke="#000" stroke-width="2"/>
            </svg>`;
    }
}

class WhBhpCard extends HTMLElement {
    connectedCallback() {
        const tools = [['check', 24], ['nodal', 24], ['decline', 24], ['date-sort', 24], ['chat', 24], ['table', 22], ['fit', 24], ['more', 24]];
        this.attachShadow({ mode: 'open' });
        this.shadowRoot.innerHTML = `
            <style>
                :host { display: block; flex: none; width: 2218px; height: 867px; margin-left: 4px; background: #fff; border-radius: 6px; box-shadow: 0 1px 3px rgba(0,0,0,.35); font-family: Roboto, sans-serif; }
                header { display: flex; align-items: flex-start; height: 81px; padding: 0 24px 0 16px; box-sizing: border-box; }
                h2 { margin: 21px 8px 0 0; font: 700 24px/28px Roboto, sans-serif; color: #222; white-space: nowrap; }
                .chip { margin: 23px 11px 0 0; width: 50px; height: 28px; border-radius: 4px; background: #d3d3d3; color: #0070c0; font: 500 13px/28px Roboto, sans-serif; letter-spacing: .5px; text-align: center; }
                .res { width: 210px; margin-top: 4px; height: 44px; border-bottom: 1px solid #8c8c8c; }
                .res label { display: block; font-size: 12px; line-height: 14px; color: #757575; }
                .res div { display: flex; justify-content: space-between; font-size: 16px; line-height: 22px; color: #222; margin-top: 4px; }
                .tools { margin-left: auto; display: flex; align-items: center; height: 24px; margin-top: 23px; color: #0070c0; }
                .tools span { display: flex; justify-content: center; width: 36.200px; }
                .tools .ok { color: #4a9a50; }
            </style>
            <header>
                <h2>Bottomhole Pressure</h2>
                <div class="chip">DATES</div>
                <div class="res"><label>Reservoir Pressure</label><div><span>5700</span><span>psia</span></div></div>
                <div class="tools">${tools.map(([n, s]) => `<span class="${n === 'check' ? 'ok' : ''}"><wh-icon name="${n}" size="${s}"></wh-icon></span>`).join('')}</div>
            </header>
            <wh-bhp-chart></wh-bhp-chart>`;
    }
}

class WhFooter extends HTMLElement {
    connectedCallback() {
        this.attachShadow({ mode: 'open' });
        this.shadowRoot.innerHTML = `
            <style>
                :host { display: block; height: 28px; overflow: hidden; background: #03305f; color: #fff; font: 400 16px/33px Roboto, sans-serif; padding-left: 6px; position: relative; z-index: 3; }
            </style>
            <slot></slot>`;
    }
}

customElements.define('wh-icon', WhIcon);
customElements.define('wh-app', WhApp);
customElements.define('wh-sidebar', WhSidebar);
customElements.define('wh-nav-item', WhNavItem);
customElements.define('wh-nav-divider', WhNavDivider);
customElements.define('wh-nav-section', WhNavSection);
customElements.define('wh-select', WhSelect);
customElements.define('wh-header', WhHeader);
customElements.define('wh-toolbar', WhToolbar);
customElements.define('wh-well-card', WhWellCard);
customElements.define('wh-tabs', WhTabs);
customElements.define('wh-bhp-chart', WhBhpChart);
customElements.define('wh-bhp-card', WhBhpCard);
customElements.define('wh-footer', WhFooter);
</script>
</body>
</html>
